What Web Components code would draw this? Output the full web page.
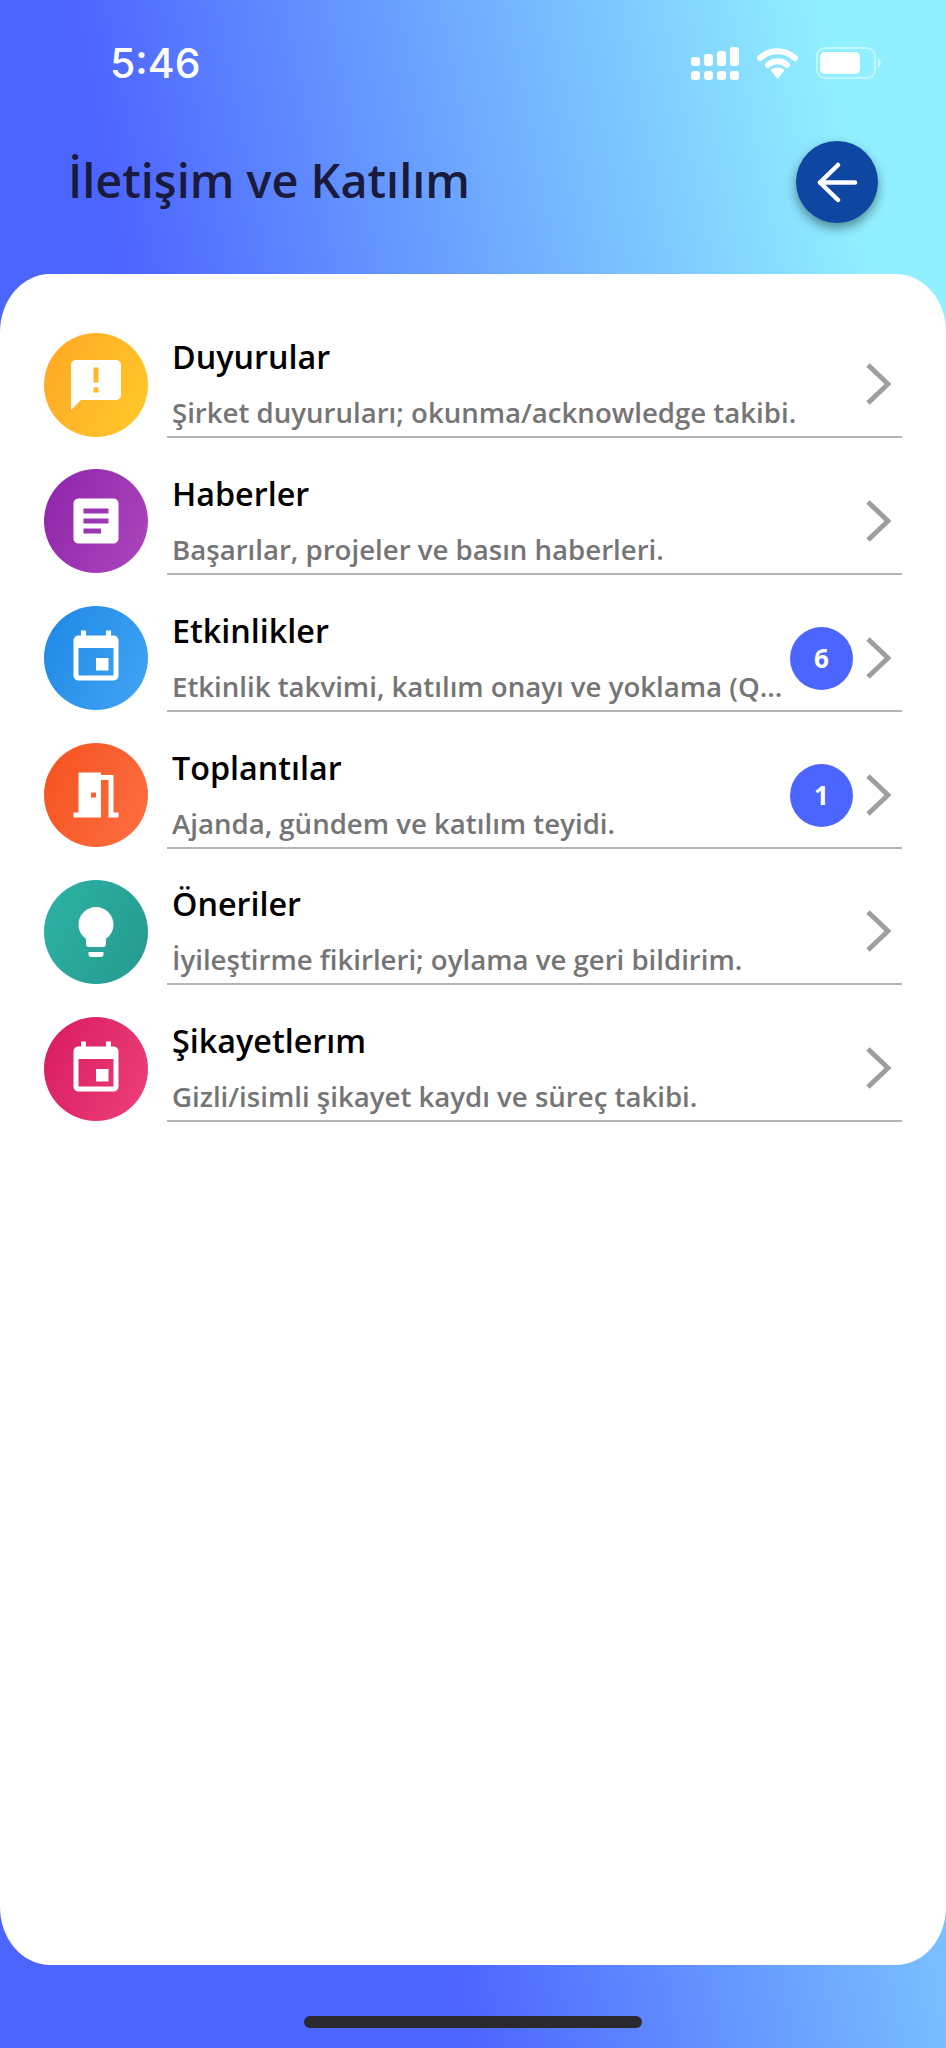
<!DOCTYPE html>
<html lang="tr">
<head>
<meta charset="utf-8">
<title>İletişim ve Katılım</title>
<style>
	html, body {
		margin: 0;
		padding: 0;
	}
</style>
</head>
<body>

<app-screen>
	<status-bar time="5:46"></status-bar>
	<page-header title="İletişim ve Katılım"></page-header>
	<menu-card>
		<menu-row icon="announcement" tone="amber" title="Duyurular" text="Şirket duyuruları; okunma/acknowledge takibi."></menu-row>
		<menu-row icon="article" tone="purple" title="Haberler" text="Başarılar, projeler ve basın haberleri."></menu-row>
		<menu-row icon="event" tone="blue" badge="6" title="Etkinlikler" text="Etkinlik takvimi, katılım onayı ve yoklama (Q..."></menu-row>
		<menu-row icon="meeting" tone="orange" badge="1" title="Toplantılar" text="Ajanda, gündem ve katılım teyidi."></menu-row>
		<menu-row icon="bulb" tone="teal" title="Öneriler" text="İyileştirme fikirleri; oylama ve geri bildirim."></menu-row>
		<menu-row icon="event" tone="pink" title="Şikayetlerım" text="Gizli/isimli şikayet kaydı ve süreç takibi."></menu-row>
	</menu-card>
	<home-bar></home-bar>
</app-screen>

<script>
"use strict"

const ICONS = {
	announcement: "M20 2H4c-1.1 0-1.99.9-1.99 2L2 22l4-4h14c1.1 0 2-.9 2-2V4c0-1.1-.9-2-2-2zm-7 9h-2V5h2v6zm0 4h-2v-2h2v2z",
	article: "M19 3H5c-1.1 0-2 .9-2 2v14c0 1.1.9 2 2 2h14c1.1 0 2-.9 2-2V5c0-1.1-.9-2-2-2zm-5 14H7v-2h7v2zm3-4H7v-2h10v2zm0-4H7V7h10v2z",
	event: "M17 12h-5v5h5v-5zM16 1v2H8V1H6v2H5c-1.11 0-1.99.9-1.99 2L3 19c0 1.1.89 2 2 2h14c1.1 0 2-.9 2-2V5c0-1.1-.9-2-2-2h-1V1h-2zm3 18H5V8h14v11z",
	meeting: "M14 6v15H3v-2h2V3h9v1h5v15h2v2h-4V6h-3zm-4 5v2h2v-2h-2z",
	bulb: "M9 21c0 .55.45 1 1 1h4c.55 0 1-.45 1-1v-1H9v1zm3-19C8.14 2 5 5.14 5 9c0 2.38 1.19 4.47 3 5.74V17c0 .55.45 1 1 1h6c.55 0 1-.45 1-1v-2.26c1.81-1.27 3-3.36 3-5.74 0-3.86-3.14-7-7-7z"
}

const TONES = {
	amber: "#ffa726, #ffca28",
	purple: "#8e24aa, #ab47bc",
	blue: "#1e88e5, #42a5f5",
	orange: "#f4511e, #ff7043",
	teal: "#2bb3a3, #26998f",
	pink: "#d81b60, #ec407a"
}

class AppScreen extends HTMLElement {
	constructor() {
		super()
		this.shadow = this.attachShadow({ mode: "open" })
	}

	connectedCallback() {
		this.shadow.innerHTML = `
			<style>
				:host {
					display: flex;
					flex-direction: column;
					width: 946px;
					height: 2048px;
					overflow: hidden;
					background: linear-gradient(79deg, #4d65ff 35%, #90f0ff 91%);
				}
			</style>
			<slot></slot>
		`
	}
}

class StatusBar extends HTMLElement {
	constructor() {
		super()
		this.shadow = this.attachShadow({ mode: "open" })
	}

	connectedCallback() {
		this.shadow.innerHTML = `
			<style>
				:host {
					display: flex;
					align-items: center;
					justify-content: space-between;
					height: 126px;
					padding: 0 64px 0 110px;
					box-sizing: border-box;
					color: #fff;
				}
				.time {
					font: 500 41px/1 Inter, "Liberation Sans", sans-serif;
				}
				.icons {
					display: flex;
					align-items: center;
					gap: 18px;
				}
				svg {
					display: block;
				}
			</style>
			<div class="time">${this.getAttribute("time")}</div>
			<div class="icons">
				<svg width="48" height="33" viewBox="0 0 48 33" fill="#fff">
					<rect x="0" y="10" width="9" height="9" rx="3"/>
					<rect x="13" y="7" width="9" height="12" rx="3"/>
					<rect x="26" y="4" width="9" height="15" rx="3"/>
					<rect x="39" y="0" width="9" height="19" rx="3"/>
					<rect x="0" y="24" width="9" height="9" rx="3"/>
					<rect x="13" y="24" width="9" height="9" rx="3"/>
					<rect x="26" y="24" width="9" height="9" rx="3"/>
					<rect x="39" y="24" width="9" height="9" rx="3"/>
				</svg>
				<svg width="41" height="32" viewBox="0 0 41 32">
					<path d="M3 11 C13 2 28 2 38 11" fill="none" stroke="#fff" stroke-width="6" stroke-linecap="round"/>
					<path d="M11 18 C16 13 25 13 30 18" fill="none" stroke="#fff" stroke-width="6" stroke-linecap="round"/>
					<path d="M13.5 23 C17 19.5 24 19.5 27.5 23 L20.5 32 Z" fill="#fff"/>
				</svg>
				<svg width="66" height="32" viewBox="0 0 66 32">
					<rect x="1" y="1" width="58" height="30" rx="8" fill="none" stroke="#fff" stroke-opacity=".45" stroke-width="2"/>
					<rect x="4" y="5" width="40" height="22" rx="5" fill="#fff"/>
					<path d="M62 11 C65.500 13 65.500 19 62 21 Z" fill="#fff" fill-opacity=".55"/>
				</svg>
			</div>
		`
	}
}

class PageHeader extends HTMLElement {
	constructor() {
		super()
		this.shadow = this.attachShadow({ mode: "open" })
	}

	connectedCallback() {
		this.shadow.innerHTML = `
			<style>
				:host {
					display: flex;
					align-items: flex-start;
					justify-content: space-between;
					height: 148px;
					padding: 15px 68px 0 68px;
					box-sizing: border-box;
				}
				h1 {
					margin: 0;
					font: 600 46.800px/78px "Open Sans", "Noto Sans", sans-serif;
					color: #1a1a3c;
				}
				button {
					width: 82px;
					height: 82px;
					padding: 0;
					border: 0;
					border-radius: 50%;
					background: #0d47a1;
					box-shadow: 0 5px 11px rgba(0, 0, 0, .42);
					display: flex;
					align-items: center;
					justify-content: center;
				}
			</style>
			<h1>${this.getAttribute("title")}</h1>
			<button>
				<svg width="42" height="42" viewBox="0 0 42 42" fill="none" stroke="#fff" stroke-width="4.500" stroke-linecap="round" stroke-linejoin="round">
					<path d="M39 21.500H4"/>
					<path d="M22 4 4 21.500 22 39"/>
				</svg>
			</button>
		`
	}
}

class MenuCard extends HTMLElement {
	constructor() {
		super()
		this.shadow = this.attachShadow({ mode: "open" })
	}

	connectedCallback() {
		this.shadow.innerHTML = `
			<style>
				:host {
					display: flex;
					flex-direction: column;
					flex: 1;
					padding-top: 27.400px;
					box-sizing: border-box;
					background: #fff;
					border-radius: 50px / 58px;
				}
			</style>
			<slot></slot>
		`
	}
}

class MenuRow extends HTMLElement {
	constructor() {
		super()
		this.shadow = this.attachShadow({ mode: "open" })
	}

	connectedCallback() {
		const badge = this.getAttribute("badge")
		const icon = ICONS[this.getAttribute("icon")]
		const tone = TONES[this.getAttribute("tone")]

		this.shadow.innerHTML = `
			<style>
				:host {
					display: flex;
					align-items: flex-end;
					height: 136.800px;
					padding: 0 44px;
					font-family: "Open Sans", "Noto Sans", sans-serif;
				}
				.circle {
					flex: none;
					display: flex;
					align-items: center;
					justify-content: center;
					width: 104px;
					height: 104px;
					margin-bottom: 1.600px;
					border-radius: 50%;
					background: linear-gradient(115deg, ${tone});
				}
				.body {
					flex: 1;
					min-width: 0;
					display: flex;
					align-items: flex-end;
					height: 136px;
					margin-left: 19px;
					padding-left: 5px;
					border-bottom: 2px solid #b4b4b4;
				}
				.copy {
					flex: 1;
					min-width: 0;
					padding-bottom: 6px;
				}
				.title {
					font-size: 32.300px;
					line-height: 44px;
					font-weight: 600;
					color: #000;
				}
				.text {
					margin-top: 16px;
					font-size: 27.600px;
					line-height: 36px;
					font-weight: 600;
					color: #757575;
					white-space: nowrap;
				}
				.side {
					flex: none;
					align-self: flex-end;
					display: flex;
					align-items: center;
					height: 104px;
					padding-right: 11px;
				}
				.badge {
					display: flex;
					align-items: center;
					justify-content: center;
					width: 63px;
					height: 63px;
					margin: 1px 12px 0 0;
					border-radius: 50%;
					background: #4d65ff;
					color: #fff;
					font-size: 26px;
					font-weight: 700;
				}
				svg {
					display: block;
				}
			</style>
			<div class="circle">
				<svg width="60" height="60" viewBox="0 0 24 24" fill="#fff" fill-rule="evenodd"><path d="${icon}"/></svg>
			</div>
			<div class="body">
				<div class="copy">
					<div class="title">${this.getAttribute("title")}</div>
					<div class="text">${this.getAttribute("text")}</div>
				</div>
				<div class="side">
					${badge ? `<div class="badge">${badge}</div>` : ""}
					<svg width="26" height="42" viewBox="0 0 26 42" fill="none" stroke="#9e9e9e" stroke-width="5">
						<path d="M3 2 23 21 3 40"/>
					</svg>
				</div>
			</div>
		`
	}
}

class HomeBar extends HTMLElement {
	constructor() {
		super()
		this.shadow = this.attachShadow({ mode: "open" })
	}

	connectedCallback() {
		this.shadow.innerHTML = `
			<style>
				:host {
					display: flex;
					justify-content: center;
					flex: none;
					height: 83px;
					padding-top: 51px;
					box-sizing: border-box;
				}
				div {
					width: 338px;
					height: 12px;
					border-radius: 6px;
					background: #2a2a2e;
				}
			</style>
			<div></div>
		`
	}
}

window.customElements.define("app-screen", AppScreen)
window.customElements.define("status-bar", StatusBar)
window.customElements.define("page-header", PageHeader)
window.customElements.define("menu-card", MenuCard)
window.customElements.define("menu-row", MenuRow)
window.customElements.define("home-bar", HomeBar)
</script>
</body>
</html>
